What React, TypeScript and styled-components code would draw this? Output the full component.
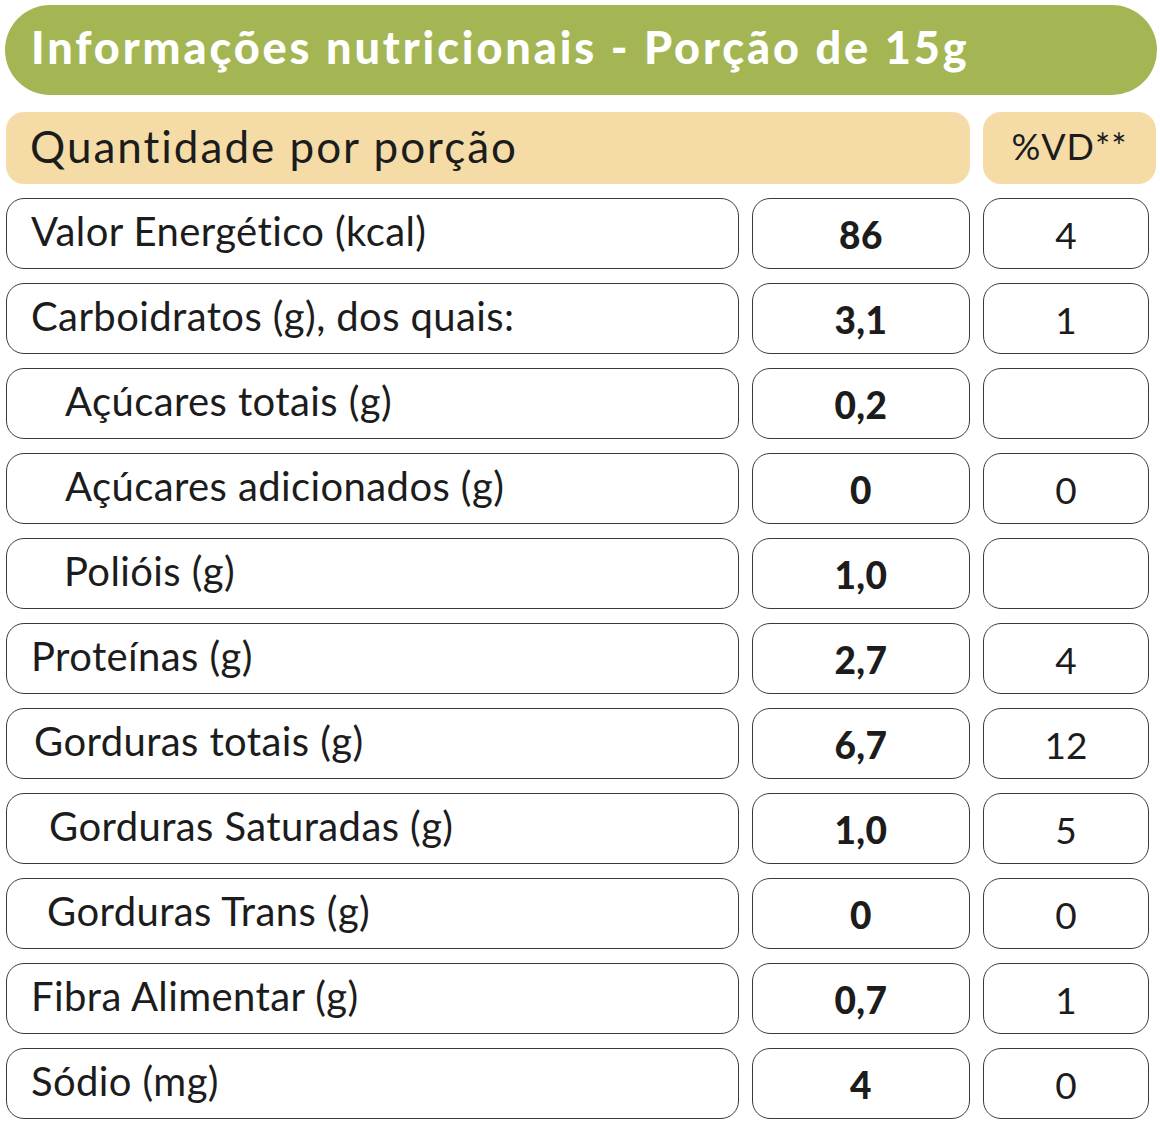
import { Fragment } from "react";
import styled, { createGlobalStyle } from "styled-components";

const GlobalStyle = createGlobalStyle`
  html, body {
    margin: 0;
    padding: 0;
    background: #ffffff;
  }
  body {
    font-family: Lato, "Open Sans", sans-serif;
    color: #1c1c1c;
  }
`;

const Page = styled.div`
  width: 1160px;
  padding: 5px 0 0;
  display: flex;
  flex-direction: column;
`;

const Banner = styled.div`
  margin: 0 3px 0 5px;
  height: 90px;
  border-radius: 45px;
  background: #a4b654;
  display: flex;
  align-items: center;
  padding-left: 26px;
  padding-bottom: 6px;
  box-sizing: border-box;
`;

const BannerTitle = styled.h1`
  margin: 0;
  color: #ffffff;
  font-size: 45px;
  font-weight: 900;
  letter-spacing: 2.9px;
`;

const Table = styled.div`
  display: grid;
  grid-template-columns: 733px 218px 166px;
  column-gap: 13px;
  row-gap: 14px;
  padding: 17px 0 0 6px;
`;

const HeadCell = styled.div<{ $span?: number }>`
  grid-column: span ${(p) => p.$span ?? 1};
  height: 72px;
  background: #f5dca7;
  border-radius: 18px;
  display: flex;
  align-items: center;
  box-sizing: border-box;
  font-size: 44px;
  letter-spacing: 2px;
  padding: 0 0 4px 24px;
`;

const VdHead = styled(HeadCell)`
  justify-content: center;
  padding: 0 0 4px;
  font-size: 36px;
  letter-spacing: 1px;
  margin-right: -7px;
`;

const Cell = styled.div`
  height: 71px;
  border: 1.5px solid #3a3a3a;
  border-radius: 18px;
  box-sizing: border-box;
  display: flex;
  align-items: center;
`;

const Label = styled(Cell)<{ $indent?: number }>`
  font-size: 40px;
  letter-spacing: 0.4px;
  padding: 0 0 5px ${(p) => 24 + (p.$indent ?? 0)}px;
`;

const Amount = styled(Cell)`
  justify-content: center;
  font-weight: 900;
  font-size: 37px;
  letter-spacing: 0.5px;
  padding-top: 2px;
`;

const Vd = styled(Cell)`
  justify-content: center;
  font-size: 37px;
  padding-top: 2px;
`;

type Row = { label: string; amount: string; vd: string; indent?: number };

const rows: Row[] = [
  { label: "Valor Energético (kcal)", amount: "86", vd: "4" },
  { label: "Carboidratos (g), dos quais:", amount: "3,1", vd: "1" },
  { label: "Açúcares totais (g)", amount: "0,2", vd: "", indent: 34 },
  { label: "Açúcares adicionados (g)", amount: "0", vd: "0", indent: 34 },
  { label: "Polióis (g)", amount: "1,0", vd: "", indent: 33 },
  { label: "Proteínas (g)", amount: "2,7", vd: "4" },
  { label: "Gorduras totais (g)", amount: "6,7", vd: "12", indent: 3 },
  { label: "Gorduras Saturadas (g)", amount: "1,0", vd: "5", indent: 18 },
  { label: "Gorduras Trans (g)", amount: "0", vd: "0", indent: 16 },
  { label: "Fibra Alimentar (g)", amount: "0,7", vd: "1" },
  { label: "Sódio (mg)", amount: "4", vd: "0" },
];

export default function App() {
  return (
    <>
      <GlobalStyle />
      <Page>
        <Banner>
          <BannerTitle>Informações nutricionais - Porção de 15g</BannerTitle>
        </Banner>
        <Table>
          <HeadCell $span={2}>Quantidade por porção</HeadCell>
          <VdHead>%VD**</VdHead>
          {rows.map((r) => (
            <Fragment key={r.label}>
              <Label $indent={r.indent}>{r.label}</Label>
              <Amount>{r.amount}</Amount>
              <Vd>{r.vd}</Vd>
            </Fragment>
          ))}
        </Table>
      </Page>
    </>
  );
}
